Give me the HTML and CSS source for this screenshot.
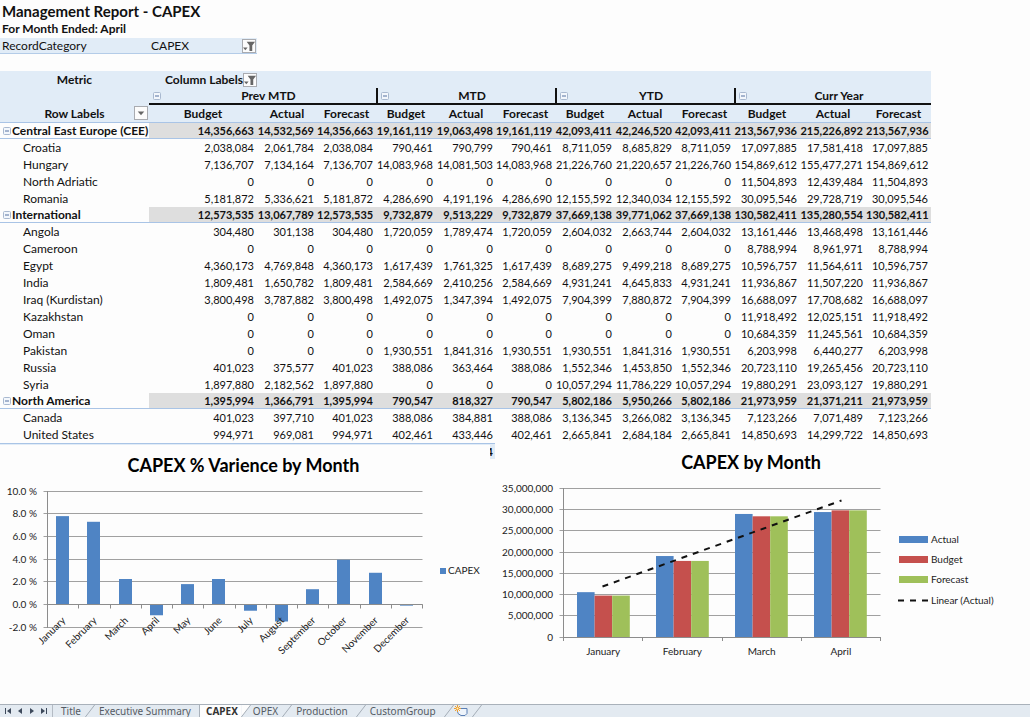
FILE: index.html
```html
<!DOCTYPE html>
<html lang="en">
<head>
<meta charset="utf-8">
<title>Management Report - CAPEX</title>
<link rel="stylesheet" href="styles.css">
</head>
<body>
<main class="sheet">
  <h1 class="report-title">Management Report - CAPEX</h1>
  <p class="report-period">For Month Ended: April</p>
  <div class="page-filter">
    <span class="filter-name">RecordCategory</span>
    <span class="filter-value">CAPEX</span>
    <button class="drop" type="button" aria-label="Filter RecordCategory"><svg viewBox="0 0 13 13"><path d="M4 2h9L10 6v6H7V6z" fill="#666"/><path d="M0 8h5L2.500 11z" fill="#666"/></svg></button>
  </div>

  <table class="pivot">
    <colgroup>
      <col class="c-label"><col class="c-first"><col class="c-num"><col class="c-last">
      <col class="c-num"><col class="c-num"><col class="c-last">
      <col class="c-num"><col class="c-num"><col class="c-last">
      <col class="c-year"><col class="c-year"><col class="c-year-last">
    </colgroup>
    <thead>
      <tr class="head-top">
        <th>Metric</th>
        <th colspan="12"><div class="column-labels">Column Labels <button class="drop" type="button" aria-label="Filter columns"><svg viewBox="0 0 13 13"><path d="M4 2h9L10 6v6H7V6z" fill="#666"/><path d="M0 8h5L2.500 11z" fill="#666"/></svg></button></div></th>
      </tr>
      <tr class="head-groups" id="groups"><th></th></tr>
      <tr class="head-measures" id="measures">
        <th><div class="row-labels">Row Labels <button class="drop" type="button" aria-label="Filter rows"><svg viewBox="0 0 13 13"><path d="M3 5h7L6.500 9z" fill="#666"/></svg></button></div></th>
      </tr>
    </thead>
    <tbody id="rows"></tbody>
  </table>
  <div class="grand-total">4</div>

  <section class="charts">
    <figure class="chart chart-variance"><svg id="variance" viewBox="0 445 490 228" role="img" aria-label="CAPEX % Varience by Month"></svg></figure>
    <figure class="chart chart-capex"><svg id="capex" viewBox="495 445 535 228" role="img" aria-label="CAPEX by Month"></svg></figure>
  </section>
</main>

<nav class="tabs" aria-label="Sheets">
  <div class="tab-nav">
    <button type="button" aria-label="First sheet"><svg viewBox="0 0 8 8"><path d="M1 1h1v6H1zM7 1v6L3 4z"/></svg></button>
    <button type="button" aria-label="Previous sheet"><svg viewBox="0 0 8 8"><path d="M6 1v6L2 4z"/></svg></button>
    <button type="button" aria-label="Next sheet"><svg viewBox="0 0 8 8"><path d="M2 1v6l4-3z"/></svg></button>
    <button type="button" aria-label="Last sheet"><svg viewBox="0 0 8 8"><path d="M6 1h1v6H6zM1 1v6l4-3z"/></svg></button>
  </div>
  <button class="tab tab-first" type="button">Title</button>
  <svg class="slash" viewBox="0 0 10 13"><path d="M0 13L10 0"/></svg>
  <button class="tab" type="button">Executive Summary</button>
  <button class="tab tab-active" type="button">CAPEX</button>
  <svg class="slash" viewBox="0 0 10 13"><path class="fill" d="M0 0h10L0 13z"/><path d="M0 13L10 0"/></svg>
  <button class="tab tab-short" type="button">OPEX</button>
  <svg class="slash" viewBox="0 0 10 13"><path d="M0 13L10 0"/></svg>
  <button class="tab" type="button">Production</button>
  <svg class="slash" viewBox="0 0 10 13"><path d="M0 13L10 0"/></svg>
  <button class="tab" type="button">CustomGroup</button>
  <svg class="slash" viewBox="0 0 10 13"><path d="M0 13L10 0"/></svg>
  <button class="tab-new" type="button" aria-label="Insert worksheet"><svg viewBox="0 0 14 12"><path d="M3 3.500h10v5L11 10.500H7L4 8.500z" fill="#eef4fb" stroke="#5b7fb5"/><path d="M3.500 0v7M0 3.500h7M1 1l5 5M6 1L1 6" stroke="#f0a030"/><circle cx="3.500" cy="3.500" r="1" fill="#fff3c0"/></svg></button>
  <svg class="slash" viewBox="0 0 10 13"><path d="M0 13L10 0"/></svg>
</nav>
<script src="report.js"></script>
</body>
</html>
```
FILE: styles.css
```css
* { box-sizing: border-box; }

body {
  margin: 0;
  min-height: 100vh;
  display: flex;
  flex-direction: column;
  background: #fdfdfd;
  color: #111;
  font-family: Lato, "Open Sans", sans-serif;
  font-size: 12px;
}

button { font: inherit; color: inherit; padding: 0; border: 0; background: none; }

.sheet { flex: 1; }

.report-title { margin: 0; padding: 2px 0 0 2px; font-size: 15px; line-height: 18px; font-weight: 700; }
.report-period { margin: 0; padding-left: 2px; font-size: 12px; line-height: 18px; font-weight: 700; }

.page-filter {
  display: grid;
  grid-template-columns: 149px 91px 13px;
  align-items: center;
  width: 257px;
  height: 16px;
  padding-left: 2px;
  background: #e1ecf7;
  border-bottom: 1px solid #b4cce8;
}

.drop { display: block; width: 14px; height: 14px; background: #fcfcfc; border: 1px solid #a9abb0; }
.drop svg { display: block; width: 12px; height: 12px; }

.pivot { margin-top: 17px; width: 931px; table-layout: fixed; border-collapse: separate; border-spacing: 0; }
.c-label { width: 149px; }
.c-first { width: 108px; }
.c-num { width: 60px; }
.c-last { width: 59px; }
.c-year { width: 66px; }
.c-year-last { width: 65px; }

.pivot th, .pivot td { padding: 0; height: 17px; line-height: 16px; white-space: nowrap; }
.pivot thead { background: #e1ecf7; }
.pivot .head-measures th { height: 18px; border-bottom: 1px solid #a9c4e6; }
.column-labels { display: flex; align-items: center; padding-left: 16px; }
.row-labels { position: relative; }
.row-labels .drop { position: absolute; right: 1px; top: 0; }

.group { display: flex; align-items: center; height: 17px; padding-left: 4px; border-bottom: 2px solid #111; }
.group-divided { padding-left: 3px; border-left: 2px solid #111; }
.group-name { flex: 1; }

.toggle { display: block; flex: none; width: 8px; height: 8px; }
.toggle svg { display: block; width: 8px; height: 8px; }

.pivot tbody th { text-align: left; font-weight: 400; padding-left: 23px; }
.pivot tbody td { text-align: right; padding-right: 3px; font-size: 11px; }
.pivot tbody .total th { height: 16px; padding-left: 3px; line-height: 15px; font-weight: 700; border-bottom: 1px solid #a9c4e6; }
.pivot tbody .total td { height: 16px; line-height: 15px; font-weight: 700; background: #dedede; border-bottom: 1px solid #a9c4e6; }
.row-name { display: flex; align-items: center; gap: 1px; }

.grand-total {
  width: 495px;
  height: 16px;
  padding-right: 2px;
  border-top: 1px solid #a9c4e6;
  background: #e1ecf7;
  text-align: right;
  font-size: 11px;
  line-height: 15px;
  font-weight: 700;
}

.charts { position: relative; display: flex; align-items: flex-start; gap: 5px; margin-top: -14px; }
.chart { margin: 0; min-width: 0; background: #fdfdfd; }
.chart-variance { flex: 490 1 0; }
.chart-capex { flex: 535 1 0; }
.chart svg { display: block; width: 100%; overflow: visible; }
.chart text { font-size: 10px; fill: #222; }
.chart .chart-title { font-size: 18px; font-weight: 700; fill: #000; }
.grid-line { stroke: #a0a0a0; }
.axis-line { stroke: #8c8c8c; }
.series-actual { fill: #4f84c4; }
.series-budget { fill: #c5504d; }
.series-forecast { fill: #9fc05a; }
.trend { stroke: #111; stroke-width: 2; stroke-dasharray: 6 6; fill: none; }

.tabs {
  display: flex;
  height: 13px;
  background: #e3eaf1;
  border-top: 1px solid #a9b1ba;
  color: #555b63;
  font-family: "Noto Sans", sans-serif;
  font-size: 10px;
}
.tab-nav { display: flex; align-items: center; gap: 4px; width: 53px; padding-left: 4px; border-right: 1px solid #b4bbc4; }
.tab-nav button { width: 8px; height: 8px; }
.tab-nav svg { display: block; width: 8px; height: 8px; fill: #3e4a5c; }
.tab { height: 12px; line-height: 12px; padding: 0 8px 0 4px; }
.tab-first { padding: 0 4px 0 8px; }
.tab-short { padding: 0 4px 0 2px; }
.tab-active { padding: 0 3px 0 6px; background: #fdfdfd; color: #333; font-weight: 700; border-left: 1px solid #a9b1ba; }
.tab-new { width: 18px; }
.tab-new svg { display: block; width: 14px; height: 12px; }
.slash { flex: none; width: 10px; height: 12px; fill: none; stroke: #a0a8b2; }
.slash .fill { fill: #fdfdfd; stroke: none; }
```
FILE: report.js
```js
const toggleIcon = '<svg viewBox="0 0 8 8"><rect x=".5" y=".5" width="7" height="7" rx="1" fill="#f3f7fc" stroke="#a9b9d0"/><path d="M2 4h4" stroke="#5570a0"/></svg>';

function toggle(name) {
  return `<button class="toggle" type="button" aria-label="Collapse ${name}">${toggleIcon}</button>`;
}

const groups = ['Prev MTD', 'MTD', 'YTD', 'Curr Year'];
const measures = ['Budget', 'Actual', 'Forecast'];

document.getElementById('groups').insertAdjacentHTML('beforeend', groups.map((name, i) =>
  `<th colspan="3"><div class="group${i ? ' group-divided' : ''}">${toggle(name)}<span class="group-name">${name}</span></div></th>`).join(''));
document.getElementById('measures').insertAdjacentHTML('beforeend',
  groups.map(() => measures.map(m => `<th>${m}</th>`).join('')).join(''));

// Each row lists budget and actual for the four periods; forecast equals budget.
const rows = [
  ['*Central East Europe (CEE)', 14356663, 14532569, 19161119, 19063498, 42093411, 42246520, 213567936, 215226892],
  ['Croatia', 2038084, 2061784, 790461, 790799, 8711059, 8685829, 17097885, 17581418],
  ['Hungary', 7136707, 7134164, 14083968, 14081503, 21226760, 21220657, 154869612, 155477271],
  ['North Adriatic', 0, 0, 0, 0, 0, 0, 11504893, 12439484],
  ['Romania', 5181872, 5336621, 4286690, 4191196, 12155592, 12340034, 30095546, 29728719],
  ['*International', 12573535, 13067789, 9732879, 9513229, 37669138, 39771062, 130582411, 135280554],
  ['Angola', 304480, 301138, 1720059, 1789474, 2604032, 2663744, 13161446, 13468498],
  ['Cameroon', 0, 0, 0, 0, 0, 0, 8788994, 8961971],
  ['Egypt', 4360173, 4769848, 1617439, 1761325, 8689275, 9499218, 10596757, 11564611],
  ['India', 1809481, 1650782, 2584669, 2410256, 4931241, 4645833, 11936867, 11507220],
  ['Iraq (Kurdistan)', 3800498, 3787882, 1492075, 1347394, 7904399, 7880872, 16688097, 17708682],
  ['Kazakhstan', 0, 0, 0, 0, 0, 0, 11918492, 12025151],
  ['Oman', 0, 0, 0, 0, 0, 0, 10684359, 11245561],
  ['Pakistan', 0, 0, 1930551, 1841316, 1930551, 1841316, 6203998, 6440277],
  ['Russia', 401023, 375577, 388086, 363464, 1552346, 1453850, 20723110, 19265456],
  ['Syria', 1897880, 2182562, 0, 0, 10057294, 11786229, 19880291, 23093127],
  ['*North America', 1395994, 1366791, 790547, 818327, 5802186, 5950266, 21973959, 21371211],
  ['Canada', 401023, 397710, 388086, 384881, 3136345, 3266082, 7123266, 7071489],
  ['United States', 994971, 969081, 402461, 433446, 2665841, 2684184, 14850693, 14299722]
];

const number = n => n.toLocaleString('en-US');

document.getElementById('rows').innerHTML = rows.map(([label, ...v]) => {
  const total = label.startsWith('*');
  const name = label.replace('*', '');
  let cells = '';
  for (let i = 0; i < v.length; i += 2) {
    cells += [v[i], v[i + 1], v[i]].map(n => `<td>${number(n)}</td>`).join('');
  }
  const head = total ? `<div class="row-name">${toggle(name)}<span>${name}</span></div>` : name;
  return `<tr class="${total ? 'total' : 'detail'}"><th scope="row">${head}</th>${cells}</tr>`;
}).join('');

const line = (cls, x1, y1, x2, y2) => `<line class="${cls}" x1="${x1}" y1="${y1}" x2="${x2}" y2="${y2}"/>`;
const rect = (cls, x, y, w, h) => `<rect class="${cls}" x="${x}" y="${y}" width="${w}" height="${h}"/>`;
const text = (x, y, anchor, s, extra = '') => `<text x="${x}" y="${y}" text-anchor="${anchor}" ${extra}>${s}</text>`;
const snap = y => Math.floor(y) + 0.5;

function drawVariance() {
  const left = 47.5, right = 422.5, zero = 604.5, unit = 11.33;
  const data = { January: 7.8, February: 7.3, March: 2.25, April: -0.95, May: 1.8, June: 2.25,
    July: -0.55, August: -1.5, September: 1.35, October: 3.95, November: 2.8, December: -0.1 };
  const step = (right - left) / 12;
  let out = text(243.5, 472, 'middle', 'CAPEX % Varience by Month', 'class="chart-title"');
  for (let p = -2; p <= 10; p += 2) {
    const y = snap(zero - p * unit);
    out += line('grid-line', left - 4, y, right, y) + text(37, y + 3.5, 'end', p.toFixed(1) + ' %');
  }
  Object.values(data).forEach((v, i) => {
    const h = Math.abs(v) * unit;
    out += rect('series-actual', Math.floor(left + step * i + step / 2 - 6.5), v > 0 ? zero - h : zero, 13, h);
  });
  out += line('axis-line', left, 491, left, 628) + line('axis-line', left, zero, right, zero);
  Object.keys(data).forEach((name, i) => {
    const tick = snap(left + step * (i + 1));
    const x = left + step * (i + 0.5) + 3, y = 621;
    out += line('axis-line', tick, zero, tick, zero + 4) + text(x, y, 'end', name, `transform="rotate(-45 ${x} ${y})"`);
  });
  out += rect('series-actual', 440, 568, 6, 6) + text(448, 574, 'start', 'CAPEX');
  document.getElementById('variance').innerHTML = out;
}

function drawCapex() {
  const left = 563.5, right = 880.5, zero = 637, unit = 4.25;
  const data = { January: [10.55, 9.75, 9.75], February: [19.05, 17.9, 17.9], March: [28.95, 28.4, 28.4], April: [29.4, 29.8, 29.8] };
  const series = ['series-actual', 'series-budget', 'series-forecast'];
  const step = (right - left) / 4;
  let out = text(751, 469, 'middle', 'CAPEX by Month', 'class="chart-title"');
  for (let m = 0; m <= 35; m += 5) {
    const y = snap(zero - m * unit);
    out += line('grid-line', left - 4, y, right, y) + text(553, y + 3.5, 'end', number(m * 1e6));
  }
  Object.entries(data).forEach(([name, values], i) => {
    values.forEach((v, j) => {
      out += rect(series[j], Math.round(left + step * i + 13) + j * 17.6, zero - v * unit, 17.6, v * unit);
    });
    const tick = snap(left + step * (i + 1));
    out += line('axis-line', tick, zero, tick, zero + 4) + text(left + step * (i + 0.5), 655, 'middle', name);
  });
  out += line('axis-line', left, 488, left, 641) + line('axis-line', left, 637.5, right, 637.5);
  out += line('trend', 602.5, 586.5, 841.5, 500.5);
  ['Actual', 'Budget', 'Forecast'].forEach((name, i) => {
    out += rect(series[i], 899, 536 + i * 20, 29, 7) + text(931, 543 + i * 20, 'start', name);
  });
  out += line('trend', 898, 600.5, 928, 600.5) + text(931, 604, 'start', 'Linear (Actual)');
  document.getElementById('capex').innerHTML = out;
}

drawVariance();
drawCapex();
```
